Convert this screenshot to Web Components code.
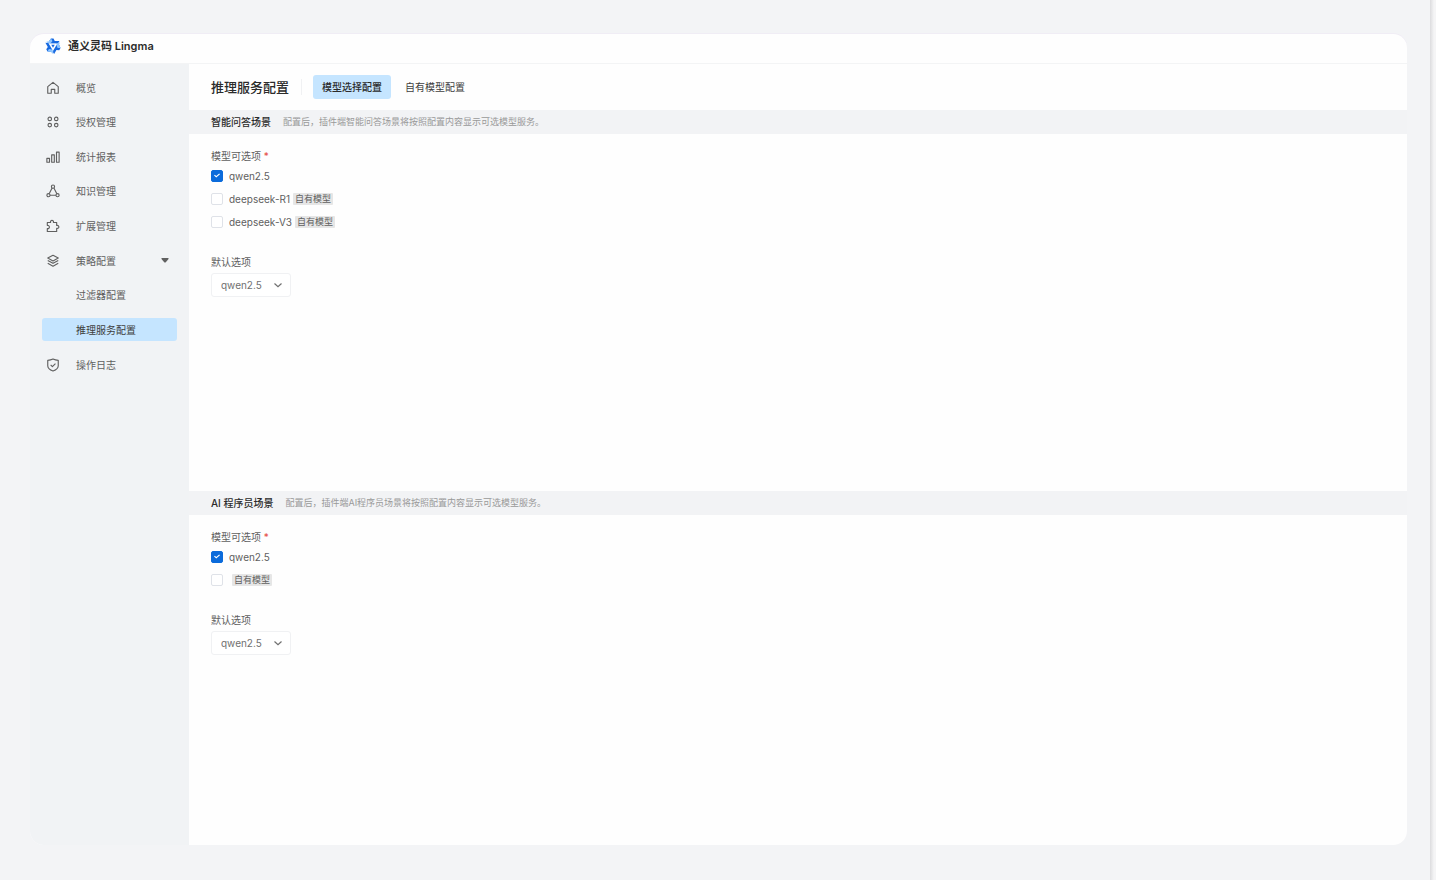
<!DOCTYPE html>
<html lang="zh-CN">
<head>
  <meta charset="utf-8">
  <title>通义灵码 Lingma</title>
  <style>
    html {
      height: 100%;
    }

    body {
      background: #f3f4f6;
      color: #606060;
      font: 10px/16px Inter, "Noto Sans CJK SC", sans-serif;
      margin: 0;
      min-height: 100%;
    }
  </style>
</head>
<body>
  <lingma-app>
    <app-brand slot="brand">通义灵码 Lingma</app-brand>

    <side-nav slot="nav">
      <nav-item icon="home">概览</nav-item>
      <nav-item icon="grid">授权管理</nav-item>
      <nav-item icon="chart">统计报表</nav-item>
      <nav-item icon="nodes">知识管理</nav-item>
      <nav-item icon="puzzle">扩展管理</nav-item>
      <nav-item icon="layers" expandable>策略配置</nav-item>
      <nav-item>过滤器配置</nav-item>
      <nav-item active>推理服务配置</nav-item>
      <nav-item icon="shield">操作日志</nav-item>
    </side-nav>

    <page-header label="推理服务配置">
      <tab-button active>模型选择配置</tab-button>
      <tab-button>自有模型配置</tab-button>
    </page-header>

    <model-scene label="智能问答场景" hint="配置后，插件端智能问答场景将按照配置内容显示可选模型服务。">
      <model-option label="qwen2.5" checked></model-option>
      <model-option label="deepseek-R1" tag="自有模型"></model-option>
      <model-option label="deepseek-V3" tag="自有模型"></model-option>
      <model-select slot="default" label="默认选项" value="qwen2.5"></model-select>
    </model-scene>

    <model-scene label="AI 程序员场景" hint="配置后，插件端AI程序员场景将按照配置内容显示可选模型服务。">
      <model-option label="qwen2.5" checked></model-option>
      <model-option tag="自有模型"></model-option>
      <model-select slot="default" label="默认选项" value="qwen2.5"></model-select>
    </model-scene>
  </lingma-app>

  <script>
    const icons = {
      home: '<path d="M6 14H2V6.500L8 1.500l6 5V14h-4V9.500H6z"/>',
      grid: '<circle cx="4.300" cy="4.500" r="2"/><circle cx="11.700" cy="4.500" r="2"/><circle cx="4.300" cy="11.500" r="2"/><circle cx="11.700" cy="11.500" r="2"/>',
      chart: '<path d="M1 9.500h3v4.500H1zM6.500 5.500h3V14h-3zM12 2.500h3V14h-3z"/>',
      nodes: '<circle cx="8" cy="3" r="1.800"/><circle cx="2.800" cy="12.800" r="1.800"/><circle cx="13.200" cy="12.800" r="1.800"/><path d="M7 4.600 3.600 11.100M9 4.600l3.400 6.500M4.600 12.800h6.800"/>',
      puzzle: '<path d="M1.500 4h3.700c-.8-3.300 4.100-3.300 3.300 0h3.700v3.400c3.300-.8 3.300 4.100 0 3.300V14.300H1.500v-3.400c3.200.6 3.200-4.100 0-3.500z"/>',
      layers: '<path d="m8 1.500 6 3.200-6 3.200-6-3.200zM2 7.500l6 3.200 6-3.200M2 10.700l6 3.200 6-3.200"/>',
      shield: '<path d="M8 1.200c2 1 4 1.400 6 1.500v6.100c0 3-2.500 4.800-6 6-3.500-1.200-6-3-6-6V2.700c2-.1 4-.5 6-1.500z"/><path d="m5.300 7.900 2 2 3.500-3.500"/>'
    };

    class LingmaApp extends HTMLElement {
      constructor() {
        super();
        this.attachShadow({ mode: 'open' }).innerHTML = `
          <style>
            :host {
              background: linear-gradient(to right, #dcdcde, #f5f5f6 4px) right / 6px 100% no-repeat;
              box-sizing: border-box;
              display: flex;
              min-height: 100vh;
              padding: 34px 29px 35px 30px;
            }

            .card {
              background: #fefefe;
              border-radius: 14px;
              box-shadow: 0 -1px 0 #f0edf5;
              display: grid;
              flex: 1;
              grid-template: 30px 1fr / 159px 1fr;
              overflow: hidden;
            }

            header {
              border-bottom: 1px solid #f3f4f5;
              grid-column: 1 / -1;
            }

            aside {
              background: #f1f3f5;
            }

            main {
              display: flex;
              flex-direction: column;
              min-width: 0;
            }
          </style>
          <div class="card">
            <header><slot name="brand"></slot></header>
            <aside><slot name="nav"></slot></aside>
            <main><slot></slot></main>
          </div>
        `;
      }
    }

    class AppBrand extends HTMLElement {
      constructor() {
        super();
        this.attachShadow({ mode: 'open' }).innerHTML = `
          <style>
            :host {
              align-items: center;
              color: #2b2b2b;
              display: flex;
              font-size: 11px;
              font-weight: 600;
              gap: 7px;
              height: 24px;
              padding-left: 15px;
            }

            svg {
              height: 16px;
              width: 16px;
            }
          </style>
          <svg viewBox="0 0 32 32" aria-hidden="true">
            <defs>
              <g id="blade">
                <path d="M12 1h5l2.500 5H29l-3 5H10L7.500 7z" fill="#1769e0"/>
                <path d="M7.500 7 12 1l3 5-4 5H6L3 7z" fill="#8cc4ff"/>
              </g>
            </defs>
            <use href="#blade"/>
            <use href="#blade" transform="rotate(120 16 16)"/>
            <use href="#blade" transform="rotate(240 16 16)"/>
            <path d="M9.500 11.500h13L16 23z" fill="#fff"/>
            <path d="M12.500 13.500h7L16 19.500z" fill="#1769e0"/>
          </svg>
          <span><slot></slot></span>
        `;
      }
    }

    class SideNav extends HTMLElement {
      constructor() {
        super();
        this.attachShadow({ mode: 'open' }).innerHTML = `
          <style>
            :host {
              display: block;
              padding: 12px;
            }

            nav {
              display: flex;
              flex-direction: column;
              height: 300px;
              justify-content: space-between;
            }
          </style>
          <nav><slot></slot></nav>
        `;
      }
    }

    class NavItem extends HTMLElement {
      constructor() {
        super();
        const icon = icons[this.getAttribute('icon')] || '';
        const expandable = this.hasAttribute('expandable');
        const tag = expandable ? 'button' : 'a';
        const attrs = expandable ? 'type="button" aria-expanded="true"' : 'href="#"';
        this.attachShadow({ mode: 'open' }).innerHTML = `
          <style>
            :host {
              display: block;
            }

            .item {
              align-items: center;
              background: none;
              border: 0;
              border-radius: 3px;
              box-sizing: border-box;
              color: inherit;
              cursor: pointer;
              display: flex;
              font: inherit;
              gap: 16px;
              height: 23px;
              padding: 0 8px 0 4px;
              text-align: left;
              text-decoration: none;
              width: 100%;
            }

            :host([active]) .item {
              background: #c5e5ff;
              color: #404040;
            }

            .icon {
              fill: none;
              height: 14px;
              stroke: #606060;
              stroke-linejoin: round;
              stroke-width: 1.3;
              width: 14px;
            }

            .text {
              flex: 1;
            }

            .caret {
              fill: #606060;
              height: 5px;
              width: 8px;
            }
          </style>
          <${tag} class="item" ${attrs}>
            <svg class="icon" viewBox="0 0 16 16" aria-hidden="true">${icon}</svg>
            <span class="text"><slot></slot></span>
            ${expandable ? '<svg class="caret" viewBox="0 0 8 5" aria-hidden="true"><path d="M1 0h6q1 0 .5 1L5 4q-1 1-2 0L.5 1Q0 0 1 0z"/></svg>' : ''}
          </${tag}>
        `;
      }
    }

    class PageHeader extends HTMLElement {
      constructor() {
        super();
        this.attachShadow({ mode: 'open' }).innerHTML = `
          <style>
            :host {
              align-items: center;
              display: flex;
              height: 46px;
              padding-left: 22px;
            }

            h1 {
              border-right: 1px solid #f0f1f3;
              color: #2b2b2b;
              font-size: 13px;
              font-weight: 500;
              margin: 0 11px 0 0;
              padding-right: 12px;
            }

            .tabs {
              display: flex;
              gap: 5px;
            }
          </style>
          <h1>${this.getAttribute('label')}</h1>
          <div class="tabs" role="tablist"><slot></slot></div>
        `;
      }
    }

    class TabButton extends HTMLElement {
      constructor() {
        super();
        this.attachShadow({ mode: 'open' }).innerHTML = `
          <style>
            :host {
              display: block;
            }

            button {
              background: none;
              border: 0;
              border-radius: 3px;
              color: #404040;
              cursor: pointer;
              display: block;
              font: inherit;
              height: 24px;
              padding: 0 9px;
            }

            :host([active]) button {
              background: #c5e5ff;
              color: #2b2b2b;
              font-weight: 500;
            }
          </style>
          <button type="button" role="tab" aria-selected="${this.hasAttribute('active')}"><slot></slot></button>
        `;
      }
    }

    class ModelScene extends HTMLElement {
      constructor() {
        super();
        this.attachShadow({ mode: 'open' }).innerHTML = `
          <style>
            :host {
              display: block;
              flex: 1 0 auto;
            }

            :host(:not(:last-child)) {
              padding-bottom: 4px;
            }

            .bar {
              align-items: center;
              background: #f2f3f5;
              display: flex;
              gap: 12px;
              height: 24px;
              padding: 0 22px;
            }

            h2 {
              color: #2b2b2b;
              font-size: 10px;
              font-weight: 500;
              margin: 0;
            }

            .hint {
              color: #999;
              font-size: 9px;
            }

            .body {
              padding: 14px 22px 0;
            }

            fieldset {
              border: 0;
              margin: 0 0 21px;
              padding: 0;
            }

            legend {
              padding: 0;
            }

            .required {
              color: #e5483c;
            }
          </style>
          <section>
            <div class="bar">
              <h2>${this.getAttribute('label')}</h2>
              <span class="hint">${this.getAttribute('hint')}</span>
            </div>
            <div class="body">
              <fieldset>
                <legend>模型可选项 <span class="required">*</span></legend>
                <slot></slot>
              </fieldset>
              <slot name="default"></slot>
            </div>
          </section>
        `;
      }
    }

    class ModelOption extends HTMLElement {
      constructor() {
        super();
        const label = this.getAttribute('label') || '';
        const tag = this.getAttribute('tag');
        this.attachShadow({ mode: 'open' }).innerHTML = `
          <style>
            :host {
              display: block;
            }

            label {
              align-items: center;
              display: flex;
              height: 23px;
            }

            input {
              appearance: none;
              background: #fff;
              border: 1px solid #dfe2e8;
              border-radius: 2px;
              box-sizing: border-box;
              display: grid;
              height: 12px;
              margin: 0 6px 0 0;
              place-items: center;
              width: 12px;
            }

            input:checked {
              background: #0b6bdb;
              border-color: #0b6bdb;
            }

            input:checked::before {
              background: #fff;
              clip-path: polygon(0 50%, 14% 34%, 38% 60%, 86% 8%, 100% 24%, 38% 92%);
              content: "";
              height: 5px;
              width: 6px;
            }

            .tag {
              background: #e6e6e6;
              border-radius: 1px;
              font-size: 9px;
              line-height: 12px;
              margin-left: 3px;
              padding: 0 2px;
            }
          </style>
          <label>
            <input type="checkbox" ${this.hasAttribute('checked') ? 'checked' : ''}>
            <span>${label}</span>
            ${tag ? `<span class="tag">${tag}</span>` : ''}
          </label>
        `;
      }
    }

    class ModelSelect extends HTMLElement {
      constructor() {
        super();
        this.attachShadow({ mode: 'open' }).innerHTML = `
          <style>
            :host {
              display: block;
            }

            label {
              display: block;
              margin-bottom: 3px;
            }

            .box {
              align-items: center;
              display: inline-grid;
            }

            select,
            svg {
              grid-area: 1 / 1;
            }

            select {
              appearance: none;
              background: #fff;
              border: 1px solid #f0f1f3;
              border-radius: 3px;
              color: #707070;
              font: inherit;
              height: 24px;
              padding: 0 28px 0 9px;
              width: 80px;
            }

            svg {
              fill: none;
              height: 10px;
              justify-self: end;
              margin-right: 8px;
              pointer-events: none;
              stroke: #707070;
              stroke-width: 1.2;
              width: 10px;
            }
          </style>
          <label for="model">${this.getAttribute('label')}</label>
          <div class="box">
            <select id="model"><option>${this.getAttribute('value')}</option></select>
            <svg viewBox="0 0 10 10" aria-hidden="true"><path d="m1.500 3.500 3.500 3.300 3.500-3.300"/></svg>
          </div>
        `;
      }
    }

    customElements.define('lingma-app', LingmaApp);
    customElements.define('app-brand', AppBrand);
    customElements.define('side-nav', SideNav);
    customElements.define('nav-item', NavItem);
    customElements.define('page-header', PageHeader);
    customElements.define('tab-button', TabButton);
    customElements.define('model-scene', ModelScene);
    customElements.define('model-option', ModelOption);
    customElements.define('model-select', ModelSelect);
  </script>
</body>
</html>
